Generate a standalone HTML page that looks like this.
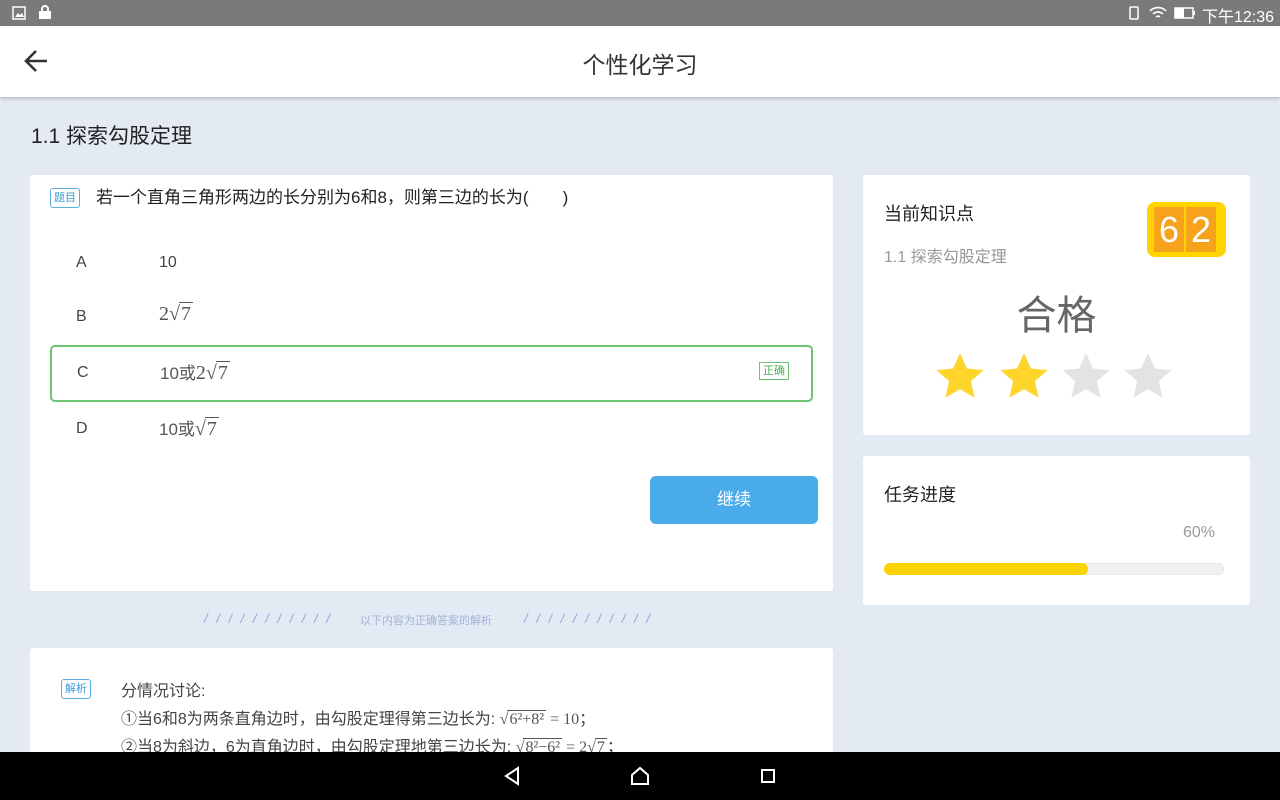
<!DOCTYPE html>
<html><head><meta charset="utf-8"><style>
*{margin:0;padding:0;box-sizing:border-box}
body{width:1280px;height:800px;overflow:hidden;background:#e4eaf4;font-family:"Liberation Sans","Noto Sans CJK SC",sans-serif;position:relative;color:#333}
.abs{position:absolute}
.status{left:0;top:0;width:1280px;height:26px;background:#7a7a7a;color:#fff;font-size:15px}
.hdr{left:0;top:26px;width:1280px;height:71px;background:#fff;box-shadow:0 2px 3px rgba(0,0,0,.18)}
.card{background:#fff;border-radius:3px}
.tag{border:1px solid #5ab0e0;color:#3a9ad6;font-size:11px;border-radius:3px;padding:1px 3px;line-height:16px}
.opt{font-size:16px;color:#444}
.sq{font-family:"Liberation Serif",serif;font-size:20px;color:#555}
.sq .r{border-top:1px solid #555;padding:0 2px;margin-left:-1px}
.nav{left:0;top:752px;width:1280px;height:48px;background:#000}
.sl{font-size:13px;color:#8aa8d8;letter-spacing:2.5px;font-style:italic;top:611px;white-space:nowrap}
</style></head><body>
<div class="abs status">
<svg class="abs" style="left:12px;top:6px" width="14" height="14"><rect x="1" y="1" width="12" height="12" fill="none" stroke="#fff" stroke-width="1.5"/><path d="M3 11l3-4 2 2 2-2 2 4z" fill="#fff"/></svg>
<svg class="abs" style="left:38px;top:4px" width="14" height="16"><rect x="1" y="7" width="12" height="8" fill="#fff"/><path d="M4 7V5a3 3 0 0 1 6 0v2" fill="none" stroke="#fff" stroke-width="2"/></svg>
<svg class="abs" style="left:1128px;top:6px" width="12" height="14"><rect x="2" y="1" width="8" height="12" rx="1" fill="none" stroke="#fff" stroke-width="1.5"/></svg>
<svg class="abs" style="left:1149px;top:5px" width="18" height="16"><path d="M1 6a11 11 0 0 1 16 0M4 9a7 7 0 0 1 10 0M7 12a3 3 0 0 1 4 0" fill="none" stroke="#fff" stroke-width="1.6"/></svg>
<svg class="abs" style="left:1174px;top:7px" width="22" height="12"><rect x="1" y="1" width="18" height="10" fill="none" stroke="#fff" stroke-width="1.5"/><rect x="1" y="1" width="9" height="10" fill="#fff"/><rect x="19" y="4" width="2" height="4" fill="#fff"/></svg>
<div class="abs" style="left:1202px;top:3px;font-size:16px">下午12:36</div>
</div>
<div class="abs hdr">
<svg class="abs" style="left:22px;top:22px" width="28" height="26"><path d="M25 13H4M14 3L4 13l10 10" fill="none" stroke="#333" stroke-width="2.6"/></svg>
<div class="abs" style="left:0;width:1280px;top:20px;text-align:center;font-size:23px;color:#333">个性化学习</div>
</div>
<div class="abs" style="left:31px;top:120px;font-size:21px;color:#222">1.1 探索勾股定理</div>

<div class="abs card" style="left:30px;top:175px;width:803px;height:416px">
<span class="abs tag" style="left:20px;top:13px">题目</span>
<div class="abs" style="left:66px;top:8px;font-size:17px;color:#222">若一个直角三角形两边的长分别为6和8，则第三边的长为(　　)</div>
<div class="abs opt" style="left:46px;top:79px">A</div><div class="abs opt" style="left:129px;top:79px">10</div>
<div class="abs opt" style="left:46px;top:133px">B</div><div class="abs sq" style="left:129px;top:128px">2√<span class="r">7</span></div>
<div class="abs" style="left:20px;top:170px;width:763px;height:57px;border:2px solid #6cc46f;border-radius:5px"></div>
<div class="abs opt" style="left:47px;top:189px">C</div><div class="abs sq" style="left:130px;top:184px"><span style="font-family:'Liberation Sans','Noto Sans CJK SC',sans-serif;font-size:17px">10或</span>2√<span class="r">7</span></div>
<span class="abs" style="left:729px;top:187px;border:1px solid #6cc46f;color:#4caf50;font-size:11px;padding:0 3px;line-height:16px">正确</span>
<div class="abs opt" style="left:46px;top:245px">D</div><div class="abs sq" style="left:129px;top:240px"><span style="font-family:'Liberation Sans','Noto Sans CJK SC',sans-serif;font-size:17px">10或</span>√<span class="r">7</span></div>
<div class="abs" style="left:620px;top:301px;width:168px;height:48px;background:#4aabea;border-radius:6px;color:#fff;font-size:17px;text-align:center;line-height:48px">继续</div>
</div>

<div class="abs sl" style="left:204px">/ / / / / / / / / / /</div>
<div class="abs" style="left:360px;top:612px;font-size:11px;color:#a0b4d4">以下内容为正确答案的解析</div>
<div class="abs sl" style="left:524px">/ / / / / / / / / / /</div>

<div class="abs card" style="left:30px;top:648px;width:803px;height:110px">
<span class="abs tag" style="left:31px;top:31px">解析</span>
<div class="abs" style="left:91px;top:30px;font-size:16px;color:#444;line-height:28px">分情况讨论:<br>①当6和8为两条直角边时，由勾股定理得第三边长为: <span class="sq" style="font-size:16px">√<span class="r">6²+8²</span> = 10</span>；<br>②当8为斜边，6为直角边时，由勾股定理地第三边长为: <span class="sq" style="font-size:16px">√<span class="r">8²−6²</span> = 2√<span class="r">7</span></span>；</div>
</div>

<div class="abs card" style="left:863px;top:175px;width:387px;height:260px">
<div class="abs" style="left:21px;top:25px;font-size:18px;color:#222">当前知识点</div>
<div class="abs" style="left:21px;top:68px;font-size:16px;color:#999">1.1 探索勾股定理</div>
<div class="abs" style="left:284px;top:27px;width:79px;height:55px;background:#ffd400;border-radius:8px"></div>
<div class="abs" style="left:291px;top:32px;width:30px;height:45px;background:#f7a21b;color:#fff;font-size:36px;text-align:center;line-height:45px">6</div>
<div class="abs" style="left:323px;top:32px;width:30px;height:45px;background:#f7a21b;color:#fff;font-size:36px;text-align:center;line-height:45px">2</div>
<div class="abs" style="left:0;width:387px;top:108px;text-align:center;font-size:40px;color:#666">合格</div>
<svg class="abs" style="left:70px;top:176px" width="250" height="52">
<defs><path id="s" d="M25 2l6.8 15.5 16.7 1.6-12.6 11.2 3.7 16.5L25 38.2 10.4 46.8l3.7-16.5L1.5 19.1l16.7-1.6z"/></defs>
<use href="#s" x="2" fill="#fdd52b"/><use href="#s" x="66" fill="#fdd52b"/><use href="#s" x="128" fill="#e3e3e3"/><use href="#s" x="190" fill="#e3e3e3"/>
</svg>
</div>

<div class="abs card" style="left:863px;top:456px;width:387px;height:149px">
<div class="abs" style="left:21px;top:25px;font-size:18px;color:#222">任务进度</div>
<div class="abs" style="left:320px;top:68px;font-size:16px;color:#999">60%</div>
<div class="abs" style="left:21px;top:107px;width:340px;height:12px;background:#f0f0f0;border-radius:6px;border:1px solid #e6e6e6"></div>
<div class="abs" style="left:21px;top:107px;width:204px;height:12px;background:#fbd300;border-radius:6px"></div>
</div>

<div class="abs nav">
<svg class="abs" style="left:503px;top:14px" width="18" height="20"><path d="M15 2L3 10l12 8z" fill="none" stroke="#fff" stroke-width="2"/></svg>
<svg class="abs" style="left:630px;top:14px" width="20" height="20"><path d="M2 18V9l8-7 8 7v9z" fill="none" stroke="#fff" stroke-width="2"/></svg>
<svg class="abs" style="left:760px;top:16px" width="16" height="16"><rect x="2" y="2" width="12" height="12" fill="none" stroke="#fff" stroke-width="2"/></svg>
</div>
</body></html>
